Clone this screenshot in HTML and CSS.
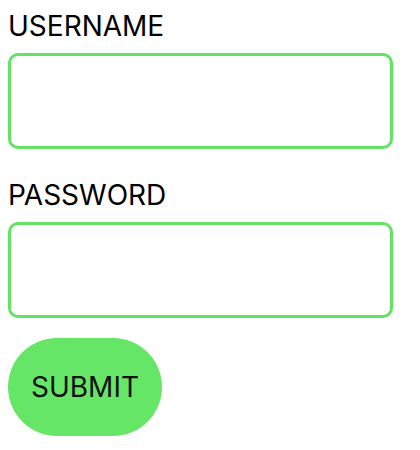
FILE: index.html
```html
<!DOCTYPE html>
<html lang="en">
<head>
<meta charset="utf-8">
<title>Login</title>
<link rel="stylesheet" href="styles.css">
</head>
<body>
<form class="form">
  <label class="field">
    <span class="label">USERNAME</span>
    <input class="input" type="text">
  </label>
  <label class="field">
    <span class="label">PASSWORD</span>
    <input class="input" type="password">
  </label>
  <button class="submit" type="button">SUBMIT</button>
</form>
</body>
</html>
```
FILE: styles.css
```css
body {
  margin: 8px;
  background: #ffffff;
  font-family: "Inter", sans-serif;
  color: #000000;
}
.form {
  display: flex;
  flex-direction: column;
  align-items: flex-start;
  width: 385px;
  padding-top: 1px;
}
.field {
  display: flex;
  flex-direction: column;
  width: 100%;
  margin-bottom: 29px;
}
.field + .field {
  margin-bottom: 20px;
}
.label {
  font-size: 28px;
  line-height: 34px;
  margin-bottom: 10px;
}
.input {
  box-sizing: border-box;
  width: 100%;
  height: 96px;
  border: 3px solid #62e462;
  border-radius: 10px;
  background: #fff;
  outline: none;
  font-size: 28px;
}
.submit {
  box-sizing: border-box;
  height: 98px;
  width: 154px;
  padding: 0;
  border: none;
  border-radius: 49px;
  background: #66e666;
  color: #111;
  font-family: "Inter", sans-serif;
  font-size: 28px;
  line-height: 34px;
}
```
